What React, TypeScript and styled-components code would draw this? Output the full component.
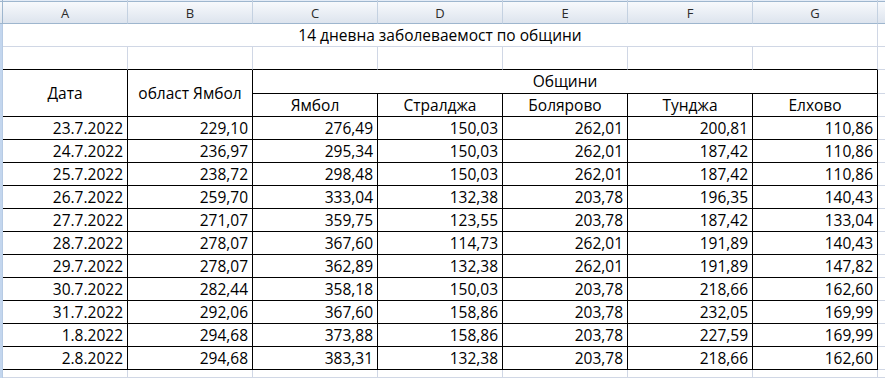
import React from "react";
import styled, { createGlobalStyle } from "styled-components";

const GRID = "#d0d7e5";
const INK = "#000000";
const HEAD_LINE = "#9eb6ce";

const Global = createGlobalStyle`
  html, body { margin: 0; padding: 0; background: #ffffff; overflow: hidden; }
  body { font-family: "Open Sans", "Liberation Sans", sans-serif; }
`;

const Sheet = styled.div`
  display: grid;
  grid-template-columns: 3px repeat(7, 125px) 1fr;
  grid-template-rows: 24px 23px 23px 24px 23px repeat(11, 23px) 1fr;
  width: 885px;
  height: 378px;
  overflow: hidden;
  background: #ffffff;
`;

const Stub = styled.div<{ $head?: boolean }>`
  box-sizing: border-box;
  background: ${(p) =>
    p.$head
      ? `linear-gradient(#e4ecf7 0 1px, ${HEAD_LINE} 1px 2px, #f6f8fb 2px, #dee5ee 100%)`
      : "#c3d6ee"};
  border-right: 1px solid ${(p) => (p.$head ? HEAD_LINE : "#b7cbe4")};
  ${(p) => (p.$head ? `border-bottom: 1px solid ${HEAD_LINE};` : "")}
`;

const ColHead = styled.div`
  box-sizing: border-box;
  display: flex;
  align-items: center;
  justify-content: center;
  padding-top: 3px;
  background: linear-gradient(#e4ecf7 0 1px, ${HEAD_LINE} 1px 2px, #f7f9fc 2px, #dde4ee 100%);
  border-right: 1px solid #c4d1e1;
  border-bottom: 1px solid ${HEAD_LINE};
  font-size: 13px;
  color: #2b2b2b;
`;

type Align = "left" | "center" | "right";

const Cell = styled.div<{
  $align?: Align;
  $right?: string;
  $bottom?: string;
  $span?: number;
  $rows?: number;
}>`
  box-sizing: border-box;
  display: flex;
  align-items: center;
  justify-content: ${(p) =>
    p.$align === "right" ? "flex-end" : p.$align === "center" ? "center" : "flex-start"};
  padding: 0 4px 1px 4px;
  font-size: 15.5px;
  color: ${INK};
  white-space: nowrap;
  overflow: hidden;
  border-right: 1px solid ${(p) => p.$right ?? GRID};
  border-bottom: 1px solid ${(p) => p.$bottom ?? GRID};
  ${(p) => (p.$span ? `grid-column: span ${p.$span};` : "")}
  ${(p) => (p.$rows ? `grid-row: span ${p.$rows};` : "")}
`;

const letters = ["A", "B", "C", "D", "E", "F", "G"];
const towns = ["Ямбол", "Стралджа", "Болярово", "Тунджа", "Елхово"];

const rows: string[][] = [
  ["23.7.2022", "229,10", "276,49", "150,03", "262,01", "200,81", "110,86"],
  ["24.7.2022", "236,97", "295,34", "150,03", "262,01", "187,42", "110,86"],
  ["25.7.2022", "238,72", "298,48", "150,03", "262,01", "187,42", "110,86"],
  ["26.7.2022", "259,70", "333,04", "132,38", "203,78", "196,35", "140,43"],
  ["27.7.2022", "271,07", "359,75", "123,55", "203,78", "187,42", "133,04"],
  ["28.7.2022", "278,07", "367,60", "114,73", "262,01", "191,89", "140,43"],
  ["29.7.2022", "278,07", "362,89", "132,38", "262,01", "191,89", "147,82"],
  ["30.7.2022", "282,44", "358,18", "150,03", "203,78", "218,66", "162,60"],
  ["31.7.2022", "292,06", "367,60", "158,86", "203,78", "232,05", "169,99"],
  ["1.8.2022", "294,68", "373,88", "158,86", "203,78", "227,59", "169,99"],
  ["2.8.2022", "294,68", "383,31", "132,38", "203,78", "218,66", "162,60"],
];

export default function App() {
  return (
    <>
      <Global />
      <Sheet>
        {/* column letters */}
        <Stub $head />
        {letters.map((l) => (
          <ColHead key={l}>{l}</ColHead>
        ))}
        <ColHead />

        {/* title row */}
        <Stub />
        <Cell $span={7} $align="center">
          14 дневна заболеваемост по общини
        </Cell>
        <Cell />

        {/* blank row */}
        <Stub />
        {letters.map((l) => (
          <Cell key={l} $bottom={INK} />
        ))}
        <Cell />

        {/* header row 1 */}
        <Stub />
        <Cell $rows={2} $align="center" $right={INK} $bottom={INK}>
          Дата
        </Cell>
        <Cell $rows={2} $align="center" $right={INK} $bottom={INK}>
          област Ямбол
        </Cell>
        <Cell $span={5} $align="center" $right={INK} $bottom={INK}>
          Общини
        </Cell>
        <Cell />

        {/* header row 2 */}
        <Stub />
        {towns.map((t) => (
          <Cell key={t} $align="center" $right={INK} $bottom={INK}>
            {t}
          </Cell>
        ))}
        <Cell />

        {/* data */}
        {rows.map((r) => (
          <React.Fragment key={r[0]}>
            <Stub />
            {r.map((v, i) => (
              <Cell key={i} $align="right" $right={INK} $bottom={INK}>
                {v}
              </Cell>
            ))}
            <Cell />
          </React.Fragment>
        ))}

        {/* tail row */}
        <Stub />
        {letters.map((l) => (
          <Cell key={l} />
        ))}
        <Cell />
      </Sheet>
    </>
  );
}
